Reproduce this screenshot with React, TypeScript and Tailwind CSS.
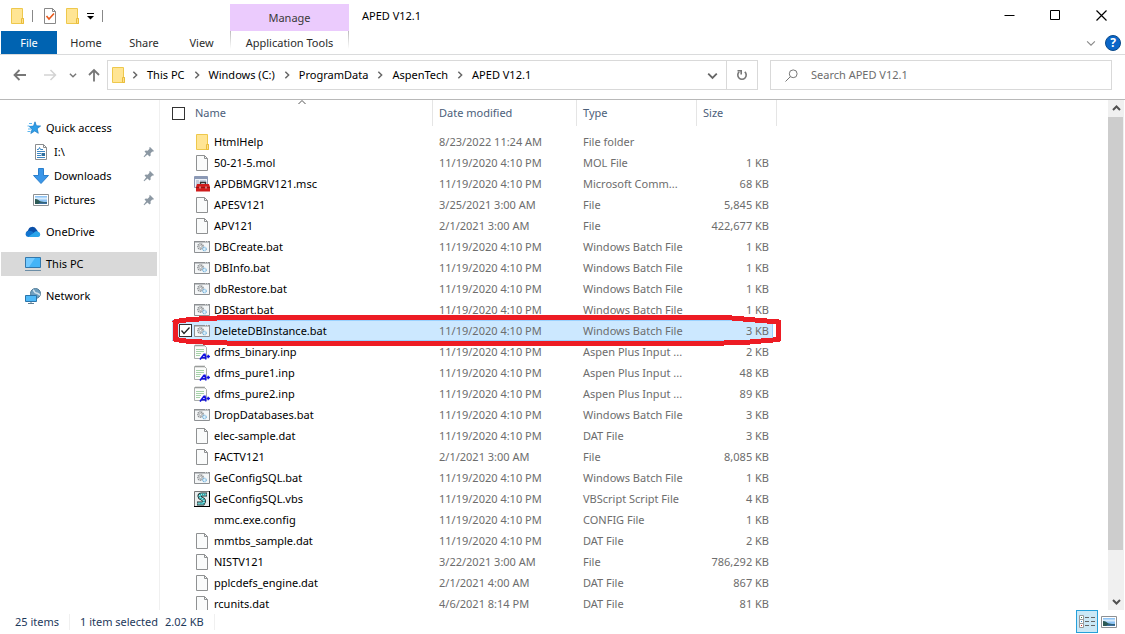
import type { ReactNode } from "react";

type FileKind = "folder" | "blank" | "msc" | "bat" | "inp" | "vbs" | "none";

type FileRow = {
  name: string;
  date: string;
  type: string;
  size: string;
  kind: FileKind;
  selected?: boolean;
};

const files: FileRow[] = [
  { name: "HtmlHelp", date: "8/23/2022 11:24 AM", type: "File folder", size: "", kind: "folder" },
  { name: "50-21-5.mol", date: "11/19/2020 4:10 PM", type: "MOL File", size: "1 KB", kind: "blank" },
  { name: "APDBMGRV121.msc", date: "11/19/2020 4:10 PM", type: "Microsoft Comm...", size: "68 KB", kind: "msc" },
  { name: "APESV121", date: "3/25/2021 3:00 AM", type: "File", size: "5,845 KB", kind: "blank" },
  { name: "APV121", date: "2/1/2021 3:00 AM", type: "File", size: "422,677 KB", kind: "blank" },
  { name: "DBCreate.bat", date: "11/19/2020 4:10 PM", type: "Windows Batch File", size: "1 KB", kind: "bat" },
  { name: "DBInfo.bat", date: "11/19/2020 4:10 PM", type: "Windows Batch File", size: "1 KB", kind: "bat" },
  { name: "dbRestore.bat", date: "11/19/2020 4:10 PM", type: "Windows Batch File", size: "1 KB", kind: "bat" },
  { name: "DBStart.bat", date: "11/19/2020 4:10 PM", type: "Windows Batch File", size: "1 KB", kind: "bat" },
  { name: "DeleteDBInstance.bat", date: "11/19/2020 4:10 PM", type: "Windows Batch File", size: "3 KB", kind: "bat", selected: true },
  { name: "dfms_binary.inp", date: "11/19/2020 4:10 PM", type: "Aspen Plus Input ...", size: "2 KB", kind: "inp" },
  { name: "dfms_pure1.inp", date: "11/19/2020 4:10 PM", type: "Aspen Plus Input ...", size: "48 KB", kind: "inp" },
  { name: "dfms_pure2.inp", date: "11/19/2020 4:10 PM", type: "Aspen Plus Input ...", size: "89 KB", kind: "inp" },
  { name: "DropDatabases.bat", date: "11/19/2020 4:10 PM", type: "Windows Batch File", size: "3 KB", kind: "bat" },
  { name: "elec-sample.dat", date: "11/19/2020 4:10 PM", type: "DAT File", size: "3 KB", kind: "blank" },
  { name: "FACTV121", date: "2/1/2021 3:00 AM", type: "File", size: "8,085 KB", kind: "blank" },
  { name: "GeConfigSQL.bat", date: "11/19/2020 4:10 PM", type: "Windows Batch File", size: "1 KB", kind: "bat" },
  { name: "GeConfigSQL.vbs", date: "11/19/2020 4:10 PM", type: "VBScript Script File", size: "4 KB", kind: "vbs" },
  { name: "mmc.exe.config", date: "11/19/2020 4:10 PM", type: "CONFIG File", size: "1 KB", kind: "none" },
  { name: "mmtbs_sample.dat", date: "11/19/2020 4:10 PM", type: "DAT File", size: "2 KB", kind: "blank" },
  { name: "NISTV121", date: "3/22/2021 3:00 AM", type: "File", size: "786,292 KB", kind: "blank" },
  { name: "pplcdefs_engine.dat", date: "2/1/2021 4:00 AM", type: "DAT File", size: "867 KB", kind: "blank" },
  { name: "rcunits.dat", date: "4/6/2021 8:14 PM", type: "DAT File", size: "81 KB", kind: "blank" },
];

const crumbs = ["This PC", "Windows (C:)", "ProgramData", "AspenTech", "APED V12.1"];

function Icon({ children }: { children?: ReactNode }) {
  return (
    <svg viewBox="0 0 16 16" className="w-4 h-4 shrink-0" fill="none" aria-hidden="true">
      {children}
    </svg>
  );
}

function FolderIcon() {
  return (
    <Icon>
      <path d="M2.5 .5h11v10h1v5h-12z" fill="#ffe594" stroke="#eec84c" />
      <path d="M12.5 10.500h2v5h-2z" fill="#ffe08a" stroke="#e9bd3c" />
    </Icon>
  );
}

function FileIcon({ kind }: { kind: FileKind }) {
  if (kind === "folder") return <FolderIcon />;
  if (kind === "blank")
    return (
      <Icon>
        <path d="M2.500.5h8l3 3v12h-11z" fill="#fafbfb" stroke="#8f9192" />
        <path d="M10.500.5v3h3" stroke="#8f9192" />
      </Icon>
    );
  if (kind === "msc")
    return (
      <Icon>
        <path d="M.5.5h13v11H.5z" fill="#eef2f8" stroke="#8b99b5" />
        <path d="M1 1h12v2H1z" fill="#8b99b5" />
        <path d="M2 5h3M2 7h3M2 9h2M6 5h6" stroke="#9aa8c2" />
        <path d="M6.500 8V6.500h5V8" stroke="#333" strokeWidth="1.400" />
        <path d="M3 8h12l1 3v4.500H2V11z" fill="#cf1c1c" />
        <path d="M2 11.500h14" stroke="#8e1212" strokeWidth=".8" />
        <path d="M5.500 10.500h1v2h-1zM11.500 10.500h1v2h-1z" fill="#f7dede" />
      </Icon>
    );
  if (kind === "bat")
    return (
      <Icon>
        <path d="M.5 2.500h15v11H.5z" fill="#f4f6f7" stroke="#8d9093" />
        <path d="M0 2h16v1.500H0z" fill="#8d9093" />
        <path d="M11 2h1M13 2h1" stroke="#fff" />
        <circle cx="6.500" cy="7.500" r="2.600" stroke="#8d9093" strokeWidth="1.600" strokeDasharray="1.200 .6" />
        <circle cx="6.500" cy="7.500" r="1.200" stroke="#9a9da0" strokeWidth=".8" />
        <circle cx="10.500" cy="10" r="1.800" fill="#d9effb" stroke="#79b4dc" strokeWidth="1.200" strokeDasharray="1 .5" />
      </Icon>
    );
  if (kind === "inp")
    return (
      <Icon>
        <path d="M.5 1.500h10l2 2v11H.5z" fill="#fbfcfb" stroke="#a9adab" />
        <path d="M2 .5v2M4 .5v2M6 .5v2M8 .5v2M10 .5v2" stroke="#8a8d8b" />
        <path d="M2 5.500h8M2 7.500h8M2 9.500h5M2 11.500h4" stroke="#a5d3a8" />
        <path d="M6 15.500 10 10.200h1l.8 5.300M8 13.700h3" stroke="#1212e0" strokeWidth="1.600" />
        <path d="M12.500 12.500h3.500M14.200 10.800v3.400" stroke="#1212e0" strokeWidth="1.400" />
      </Icon>
    );
  if (kind === "vbs")
    return (
      <Icon>
        <path d="M.5.500h15v15H.5z" fill="#e9eeee" stroke="#777" />
        <path d="M0 15.500h16M15.500 0v16" stroke="#000" />
        <path d="M13 3.500H7.500C4.500 3.500 5 6.500 7.500 7.500s3.500 2.500 1.500 5H3" stroke="#1a2c2c" strokeWidth="4" />
        <path d="M12.500 3.500H7.500C4.800 3.500 5.200 6.500 7.500 7.500s3.500 2.500 1.500 5H3.500" stroke="#b9f2f2" strokeWidth="2.200" />
        <path d="M11.500 3.500H7.500C4.800 3.500 5.200 6.500 7.500 7.500s3.500 2.500 1.500 5H4.500" stroke="#19a5aa" strokeWidth="2" strokeDasharray="1.400 .8" />
      </Icon>
    );
  return <Icon />;
}

function StarIcon() {
  return (
    <Icon>
      <path d="m10 1.800 1.400 4 4.200.2-3.400 2.700 1.100 4.600-3.600-2.300L5.800 13.500l1.300-4.300L4.200 6.500l4.300-.4z" fill="#2f9fe8" stroke="#1979c4" strokeWidth=".7" />
      <path d="M4 3.500h3M2.500 6h2M3 9h3M2.500 11.500h3" stroke="#5db7f0" />
    </Icon>
  );
}

function DocumentIcon() {
  return (
    <Icon>
      <path d="M2.500.5h8l3 3v12h-11z" fill="#fff" stroke="#8b8d8f" />
      <path d="M10.500.5v3h3" stroke="#8b8d8f" />
      <path d="M4 5.500h1.500l1-2 1 2H10M4 7.500h8M4 9.500h4M4 11.500h4M4 13.500h8" stroke="#3b86c4" />
      <path d="M8.500 9h3.500v3H8.500z" fill="#2f6f9f" />
    </Icon>
  );
}

function DownloadIcon() {
  return (
    <Icon>
      <path d="M5.500.5h5v7h5L8 15.500.5 7.500h5z" fill="#3a96e8" stroke="#2b7fcc" />
    </Icon>
  );
}

function PictureIcon() {
  return (
    <Icon>
      <path d="M.5 2.500h15v11H.5z" fill="#fff" stroke="#8d9093" />
      <path d="M2 4h12v8H2z" fill="#8fc4f5" />
      <path d="M2 5.500h12v2H2z" fill="#d9ecfb" />
      <path d="M2 7c3 0 4 2 6 2.500s4 .5 6 .5v2H2z" fill="#2d5a55" />
      <path d="M7 10.500h7V12H5z" fill="#3c6f9e" />
    </Icon>
  );
}

function CloudIcon() {
  return (
    <Icon>
      <path d="M3 12a3 3 0 0 1 0-5.500A4.500 4.500 0 0 1 11.500 5.500l1.500 2-8 4.500z" fill="#0a4fa8" />
      <path d="M3.200 13A3 3 0 0 1 2.500 7.200c2.500-1 4.500 0 6 1.300l-3 4.500z" fill="#1374cf" />
      <path d="M3 13l6-4.500c1.500-1.600 3.500-1.400 4.300-.7a2.700 2.700 0 0 1 0 5.200z" fill="#2aa4ea" />
    </Icon>
  );
}

function MonitorIcon() {
  return (
    <Icon>
      <path d="M.5 1.500h15v10H.5z" fill="#45b4f7" stroke="#3277ab" />
      <path d="M1 2h9L4 11H1z" fill="#74caff" />
      <path d="M0 14.500h16" stroke="#6b8da6" />
    </Icon>
  );
}

function NetworkIcon() {
  return (
    <Icon>
      <circle cx="10.500" cy="5.500" r="5" fill="#6f9fbf" stroke="#517c99" />
      <path d="M8 2c2 1 1 3 3 3s2 1 4 2" stroke="#d2e3ee" strokeWidth="1.500" />
      <path d="M.5 7.500h11v6H.5z" fill="#4fb9f8" stroke="#2b74a9" />
      <path d="M6 14v1.500M3 15.500h6" stroke="#5e7f96" />
    </Icon>
  );
}

function PinIcon() {
  return (
    <svg viewBox="0 0 12 12" className="w-3 h-3 shrink-0" aria-hidden="true">
      <path d="M7 1l4 4-1 .8-.8-.2L7.500 7.500l.2 2L6.500 10.500 4.500 8.500 1.200 11.200l-.6-.4L3.200 7.200 1.500 5.500l1.200-1 2 .2L6.500 2.800 6.200 1.800z" fill="#8c98a3" />
    </svg>
  );
}

function Chevron({ dir, className }: { dir: "right" | "down" | "up"; className: string }) {
  const d = dir === "right" ? "M3 1.500 6 4.500 3 7.500" : dir === "down" ? "M1 3l3.500 3.500L8 3" : "M1 6l3.500-3.500L8 6";
  return (
    <svg viewBox="0 0 9 9" className={className} fill="none" stroke="currentColor" aria-hidden="true">
      <path d={d} />
    </svg>
  );
}

function CheckBox({ label, checked, className }: { label: string; checked?: boolean; className?: string }) {
  return (
    <span className={`grid shrink-0 ${className ?? ""}`}>
      <input
        type="checkbox"
        aria-label={label}
        defaultChecked={checked}
        className="peer [grid-area:1/1] appearance-none w-[13px] h-[13px] border border-[#333] bg-white"
      />
      <svg viewBox="0 0 13 13" className="[grid-area:1/1] w-[13px] h-[13px] pointer-events-none opacity-0 peer-checked:opacity-100" fill="none" stroke="#222" strokeWidth="1.300">
        <path d="M2.500 6.500 5 9.500l5.500-6" />
      </svg>
    </span>
  );
}

function TitleBar() {
  return (
    <div className="flex h-[31px] pr-px">
      <div className="flex items-center w-[230px] pl-[9px]">
        <FolderIcon />
        <span className="w-px h-3 ml-[7px] bg-[#888]" />
        <button type="button" aria-label="Properties" className="ml-[9px]">
          <Icon>
            <path d="M2.500.5h8l3 3v12h-11z" fill="#fff" stroke="#888" />
            <path d="M10.500.5v3h3" stroke="#888" />
            <path d="m4.500 8 2.500 3 5-5.500" stroke="#e8591c" strokeWidth="1.600" />
          </Icon>
        </button>
        <button type="button" aria-label="New folder" className="ml-[6px]">
          <FolderIcon />
        </button>
        <button type="button" aria-label="Customize Quick Access Toolbar" className="ml-[6px]">
          <svg viewBox="0 0 9 9" className="w-[9px] h-[9px]">
            <path d="M1 2.500h7" stroke="#000" />
            <path d="M1 5h7L4.500 8.500z" />
          </svg>
        </button>
        <span className="w-px h-3 ml-[7px] bg-[#888]" />
      </div>
      <div className="flex items-center justify-center w-[119px] mt-1 bg-[#ebcbfd] text-[#3a3a3a]">Manage</div>
      <h1 className="flex-1 pl-[13px] leading-[31px] text-black">APED V12.1</h1>
      <button type="button" aria-label="Minimize" className="grid place-items-center w-[46px]">
        <svg viewBox="0 0 11 11" className="w-[11px] h-[11px]" stroke="#000"><path d="M.5 5.500h10" /></svg>
      </button>
      <button type="button" aria-label="Maximize" className="grid place-items-center w-[46px]">
        <svg viewBox="0 0 11 11" className="w-[11px] h-[11px]" fill="none" stroke="#000"><path d="M.5.5h9v9h-9z" /></svg>
      </button>
      <button type="button" aria-label="Close" className="grid place-items-center w-[46px]">
        <svg viewBox="0 0 11 11" className="w-[11px] h-[11px]" stroke="#000" strokeWidth="1.200"><path d="m.5.5 10 10M10.500.5l-10 10" /></svg>
      </button>
    </div>
  );
}

function RibbonTabs() {
  return (
    <nav className="flex h-6 border-b border-[#dadbdc] text-[#2b2b2b]">
      <button type="button" className="w-14 ml-px bg-[#0063b1] text-white">File</button>
      <button type="button" className="w-[58px]">Home</button>
      <button type="button" className="w-[58px]">Share</button>
      <button type="button" className="w-[57px]">View</button>
      <div className="flex w-[119px]">
        <span className="w-px h-[18px] bg-gradient-to-b from-[#bbb] to-white" />
        <button type="button" className="flex-1 whitespace-nowrap">Application Tools</button>
        <span className="w-px h-[18px] bg-gradient-to-b from-[#bbb] to-white" />
      </div>
      <div className="flex items-center gap-[9px] ml-auto pr-1">
        <button type="button" aria-label="Minimize the Ribbon">
          <Chevron dir="down" className="w-[10px] h-[10px] text-[#8a8a8a]" />
        </button>
        <button type="button" aria-label="Help" className="w-4 h-4 rounded-full border border-[#0b4a8a] bg-[#0a66c8] text-white text-[12px] leading-[14px] font-bold">
          ?
        </button>
      </div>
    </nav>
  );
}

function AddressRow() {
  return (
    <div className="flex items-center h-[45px] pr-[13px] pb-[9px] pt-[5px] border-b border-[#b8b8b8]">
      <div className="flex items-center w-[107px] pl-[13px] text-[#777]">
        <button type="button" aria-label="Back">
          <svg viewBox="0 0 14 14" className="w-[14px] h-[14px]" fill="none" stroke="currentColor" strokeWidth="1.800"><path d="M13 7H1.500M6.500 2l-5 5 5 5" /></svg>
        </button>
        <button type="button" aria-label="Forward" className="ml-4 text-[#d3d3d3]">
          <svg viewBox="0 0 14 14" className="w-[14px] h-[14px]" fill="none" stroke="currentColor" strokeWidth="1.500"><path d="M1 7h11.500M7.500 2l5 5-5 5" /></svg>
        </button>
        <button type="button" aria-label="Recent locations" className="ml-3">
          <Chevron dir="down" className="w-2 h-2 stroke-[1.500]" />
        </button>
        <button type="button" aria-label="Up" className="ml-[10px]">
          <svg viewBox="0 0 14 14" className="w-[14px] h-[14px]" fill="none" stroke="currentColor" strokeWidth="1.800"><path d="M7 13.500V2M2 7l5-5 5 5" /></svg>
        </button>
      </div>
      <div className="flex flex-1 h-[30px] border border-[#d9d9d9]">
        <div className="flex flex-1 items-center pl-[2px] text-black whitespace-nowrap">
          <span className="-mr-[3px]"><FolderIcon /></span>
          {crumbs.map((crumb) => (
            <span key={crumb} className="flex items-center">
              <Chevron dir="right" className="w-[10px] h-[10px] mx-[7px] text-[#666] stroke-[1.300]" />
              <a href="#">{crumb}</a>
            </span>
          ))}
        </div>
        <button type="button" aria-label="Previous locations" className="grid place-items-center w-7 text-[#666]">
          <Chevron dir="down" className="w-[11px] h-[11px] stroke-[1.500]" />
        </button>
        <button type="button" aria-label="Refresh" className="grid place-items-center w-[31px] border-l border-[#d9d9d9]">
          <svg viewBox="0 0 12 12" className="w-3 h-3" fill="none" stroke="#777" strokeWidth="1.600">
            <path d="M8.800 2.900A4.200 4.200 0 1 1 3.200 2.900" />
            <path d="M1.500 1.800h3.700v3.700" />
          </svg>
        </button>
      </div>
      <label className="flex items-center w-[342px] h-[30px] ml-3 pl-[14px] border border-[#d9d9d9]">
        <svg viewBox="0 0 13 13" className="w-[13px] h-[13px]" fill="none" stroke="#777">
          <circle cx="8.200" cy="4.800" r="3.900" />
          <path d="M5.500 7.500.5 12.500" />
        </svg>
        <input type="search" aria-label="Search APED V12.1" placeholder="Search APED V12.1" className="flex-1 min-w-0 ml-[13px] outline-none placeholder:text-[#6d6d6d]" />
      </label>
    </div>
  );
}

function NavItem({ icon, label, child, active }: { icon: ReactNode; label: string; child?: boolean; active?: boolean }) {
  return (
    <a href="#" className={`flex items-center gap-[5px] h-6 pr-[2px] ${child ? "pl-8" : "pl-6"} ${active ? "bg-[#d9d9d9]" : ""}`}>
      {icon}
      <span className="flex-1">{label}</span>
      {child && <PinIcon />}
    </a>
  );
}

function Sidebar() {
  return (
    <aside className="flex flex-col gap-2 w-[160px] shrink-0 pt-4 pl-px pr-[2px] border-r border-[#f0f0f0] text-black">
      <div>
        <NavItem icon={<StarIcon />} label="Quick access" />
        <NavItem icon={<DocumentIcon />} label="I:\" child />
        <NavItem icon={<DownloadIcon />} label="Downloads" child />
        <NavItem icon={<PictureIcon />} label="Pictures" child />
      </div>
      <NavItem icon={<CloudIcon />} label="OneDrive" />
      <NavItem icon={<MonitorIcon />} label="This PC" active />
      <NavItem icon={<NetworkIcon />} label="Network" />
    </aside>
  );
}

// Hand-drawn marker loop around the selected row
function RedMarker() {
  return (
    <svg viewBox="0 0 610 34" className="absolute left-0 -top-2 z-10 w-[610px] h-[34px] pointer-events-none" fill="none" stroke="#ed1c24" strokeWidth="5" strokeLinejoin="round" shapeRendering="crispEdges" aria-hidden="true">
      <path d="M3 8.500 18 6.500 54 4.500H554L583 7l23.500 2v17.500L578 29l-39 1.500H67L18 28.500 3 26.500z" />
    </svg>
  );
}

function FileTable() {
  const cell = "h-[21px] p-0 whitespace-nowrap";
  const th = "flex items-center h-[26px] border-r border-[#e5e5e5]";
  return (
    <table className="ml-3 w-[605px] table-fixed border-separate border-spacing-0">
      <thead>
        <tr className="text-left text-[#4c607a]">
          <th className="w-[261px] p-0 pb-[5px] font-normal">
            <div className={`${th} relative gap-[10px]`}>
              <CheckBox label="Select all" />
              Name
              <Chevron dir="up" className="absolute top-[-2px] left-1/2 -translate-x-1/2 w-[9px] h-[9px] text-[#555]" />
            </div>
          </th>
          <th className="w-[144px] p-0 pb-[5px] font-normal"><div className={`${th} pl-[6px]`}>Date modified</div></th>
          <th className="w-[120px] p-0 pb-[5px] font-normal"><div className={`${th} pl-[6px]`}>Type</div></th>
          <th className="w-[80px] p-0 pb-[5px] font-normal"><div className={`${th} pl-[6px]`}>Size</div></th>
        </tr>
      </thead>
      <tbody className="text-[#6d6d6d]">
        {files.map((f) => {
          const edge = f.selected ? "bg-[#cce8ff] border-y border-[#99d1ff]" : "";
          return (
            <tr key={f.name}>
              <td className={`${cell} ${edge} relative`}>
                <div className="flex items-center pl-[7px] text-black">
                  <CheckBox label={`Select ${f.name}`} checked={f.selected} className={f.selected ? "" : "opacity-0 hover:opacity-100"} />
                  <span className="ml-[2px] mr-1"><FileIcon kind={f.kind} /></span>
                  {f.name}
                </div>
                {f.selected && <RedMarker />}
              </td>
              <td className={`${cell} ${edge} pl-[6px]`}>{f.date}</td>
              <td className={`${cell} ${edge} pl-[6px]`}>{f.type}</td>
              <td className={`${cell} pr-1`}>
                <div className={`flex items-center justify-end h-[21px] ${f.selected ? `${edge} border-r pr-[3px]` : "pr-1"}`}>{f.size}</div>
              </td>
            </tr>
          );
        })}
      </tbody>
    </table>
  );
}

function ScrollBar() {
  return (
    <div className="flex flex-col w-4 mr-px shrink-0 bg-[#f0f0f0] text-[#505050]">
      <button type="button" aria-label="Scroll up" className="grid place-items-center h-[17px]">
        <Chevron dir="up" className="w-[9px] h-[9px] stroke-2" />
      </button>
      <div className="flex-1">
        <div className="w-[15px] h-[91%] bg-[#cdcdcd]" />
      </div>
      <button type="button" aria-label="Scroll down" className="grid place-items-center h-[17px]">
        <Chevron dir="down" className="w-[9px] h-[9px] stroke-2" />
      </button>
    </div>
  );
}

function StatusBar() {
  return (
    <footer className="flex items-center h-6 pl-[15px] pr-2 text-[#1e395b]">
      <span className="w-[55px] border-r border-[#f0f0f0]">25 items</span>
      <span className="pl-[10px]">1 item selected</span>
      <span className="pl-[7px] pr-[10px] border-r border-[#f0f0f0]">2.02 KB</span>
      <button type="button" aria-label="Details view" className="grid place-items-center w-[22px] h-[23px] ml-auto mb-px border border-[#26a0da] bg-[#cbe8f6]">
        <svg viewBox="0 0 16 13" className="w-4 h-[13px]" fill="none">
          <path d="M.5.5h4v4h-4zM.5 4.500h4v4h-4zM.5 8.500h4v4h-4z" fill="#fff" stroke="#999" />
          <path d="M2 2.500h1" stroke="#3a7d44" />
          <path d="M2 6.500h1" stroke="#3a86c4" />
          <path d="M2 10.500h1" stroke="#c33" />
          <path d="M6 2.500h4M12 2.500h4M6 6.500h4M12 6.500h4M6 10.500h4M12 10.500h4" stroke="#666" />
        </svg>
      </button>
      <button type="button" aria-label="Large icons view" className="grid place-items-center w-[22px] h-[23px] mr-[-3px]">
        <PictureIcon />
      </button>
    </footer>
  );
}

export default function App() {
  return (
    <div className="flex flex-col h-screen overflow-hidden bg-white text-[11px] leading-4 font-['Noto_Sans','Open_Sans',sans-serif]">
      <TitleBar />
      <RibbonTabs />
      <AddressRow />
      <div className="flex flex-1 min-h-0">
        <Sidebar />
        <main className="flex-1 min-w-0 overflow-hidden">
          <FileTable />
        </main>
        <ScrollBar />
      </div>
      <StatusBar />
    </div>
  );
}
